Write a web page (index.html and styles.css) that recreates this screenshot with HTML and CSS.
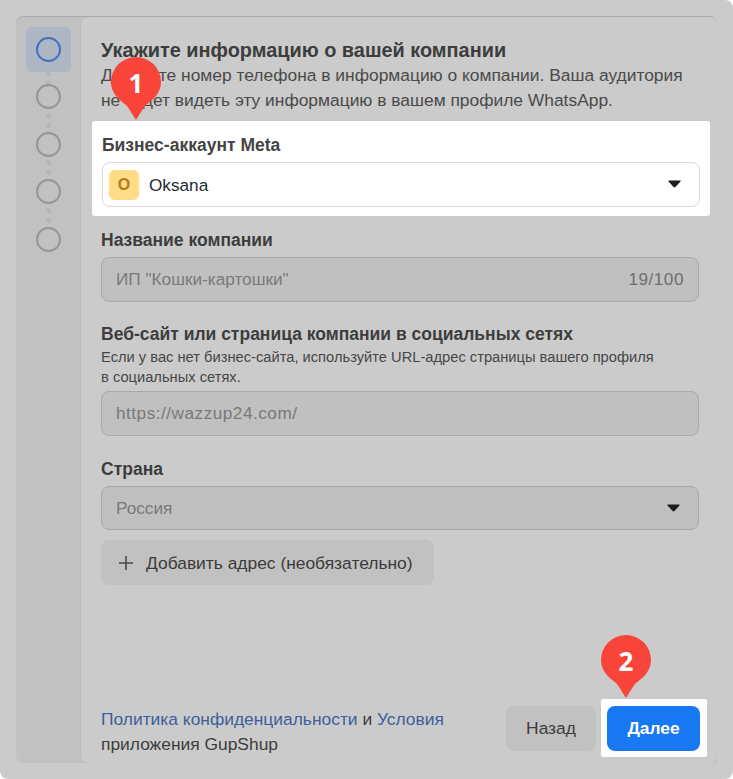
FILE: index.html
```html
<!DOCTYPE html>
<html lang="ru">
<head>
<meta charset="utf-8">
<title>WhatsApp</title>
<link rel="stylesheet" href="styles.css">
</head>
<body>
<div class="overlay">
  <div class="panel">
    <nav class="steps">
      <div class="step-active"><span class="ring ring-blue"></span></div>
      <span class="dots"><i></i><i></i></span>
      <span class="ring"></span>
      <span class="dots"><i></i><i></i></span>
      <span class="ring"></span>
      <span class="dots"><i></i><i></i></span>
      <span class="ring"></span>
      <span class="dots"><i></i><i></i></span>
      <span class="ring"></span>
    </nav>
    <main class="main">
      <h1 class="title">Укажите информацию о вашей компании</h1>
      <p class="lead">Добавьте номер телефона в информацию о компании. Ваша аудитория не будет видеть эту информацию в вашем профиле WhatsApp.</p>
      <section class="highlight">
        <div class="label label-hl">Бизнес-аккаунт Meta</div>
        <div class="account">
          <span class="avatar">O</span>
          <span class="account-name">Oksana</span>
          <svg class="caret caret-account" width="13" height="8" viewBox="0 0 13 8"><path d="M1 0.5h11c.6 0 .9.6.5 1L7.4 7c-.5.6-1.3.6-1.8 0L.5 1.5C.1 1.1.4.5 1 .5z"/></svg>
        </div>
      </section>
      <div class="label label-company">Название компании</div>
      <div class="input"><span class="ph">ИП "Кошки-картошки"</span><span class="count">19/100</span></div>
      <div class="label label-site">Веб-сайт или страница компании в социальных сетях</div>
      <p class="hint">Если у вас нет бизнес-сайта, используйте URL-адрес страницы вашего профиля<br>в социальных сетях.</p>
      <div class="input input-site"><span class="ph ph-url">https://wazzup24.com/</span></div>
      <div class="label label-country">Страна</div>
      <div class="input input-country"><span class="ph">Россия</span>
        <svg class="caret" width="13" height="8" viewBox="0 0 13 8"><path d="M1 0.5h11c.6 0 .9.6.5 1L7.4 7c-.5.6-1.3.6-1.8 0L.5 1.5C.1 1.1.4.5 1 .5z"/></svg>
      </div>
      <div class="add">
        <svg class="plus" width="14" height="14" viewBox="0 0 14 14"><path d="M7 0v14M0 7h14"/></svg>
        <span class="add-text">Добавить адрес (необязательно)</span>
      </div>
      <footer class="footer">
        <p class="legal"><a class="link">Политика конфиденциальности</a> и <a class="link">Условия</a><br>приложения GupShup</p>
        <div class="actions">
          <button class="btn btn-back">Назад</button>
          <div class="next-wrap"><button class="btn btn-next">Далее</button></div>
        </div>
      </footer>
    </main>
  </div>
</div>
<div class="pin pin-1">
  <svg width="50" height="64" viewBox="0 0 50 64"><path d="M25 0a25 25 0 0 1 25 25c0 11-8 18-15 23-3 3-6 9-10 15-4-6-7-12-10-15C8 43 0 36 0 25A25 25 0 0 1 25 0z"/></svg>
  <span class="pin-num">1</span>
</div>
<div class="pin pin-2">
  <svg width="50" height="64" viewBox="0 0 50 64"><path d="M25 0a25 25 0 0 1 25 25c0 11-8 18-15 23-3 3-6 9-10 15-4-6-7-12-10-15C8 43 0 36 0 25A25 25 0 0 1 25 0z"/></svg>
  <span class="pin-num">2</span>
</div>
</body>
</html>
```
FILE: styles.css
```css
* { box-sizing: border-box; }
html, body { margin: 0; height: 100%; background: #fff; }
body { position: relative; width: 733px; height: 779px; overflow: hidden; font-family: "Liberation Sans", Arial, sans-serif; color: #3b3b3b; }
.overlay { width: 733px; height: 779px; padding: 16px; background: #cbcbcb; border-radius: 0 8px 8px 8px; }
.panel { display: flex; height: 747px; background: #c1c1c1; border-top: 1px solid #a9a9ae; border-radius: 8px 8px 0 8px; }
.steps { width: 65px; flex: none; display: flex; flex-direction: column; align-items: center; padding: 10px 0 0 0; }
.step-active { width: 45px; height: 45px; display: flex; align-items: center; justify-content: center; background: #afb6c3; border-radius: 6px; margin-left: -1px; }
.ring { display: block; width: 25px; height: 25px; border: 2.5px solid #959595; border-radius: 50%; flex: none; margin-left: -1px; }
.ring-blue { border-color: #3f70c4; margin: 0; }
.dots { display: flex; flex-direction: column; gap: 5px; padding: 0; height: 22.5px; justify-content: center; margin-left: -1px; }
.steps > .step-active + .dots { height: 17px; margin-top: -5px; justify-content: flex-start; padding-top: 5px; }
.dots i { display: block; width: 5px; height: 5px; border-radius: 50%; background: #b4b4b4; }
.main { flex: 1; display: flex; flex-direction: column; min-width: 0; padding: 21px 18px 0 20px; background: #cbcbcb; border-radius: 8px; box-shadow: -1px 0 2px rgba(0,0,0,.04); }
.title { margin: 0; font-size: 19.9px; line-height: 24px; font-weight: 700; color: #3d3d3d; }
.lead { margin: 1px 0 0; font-size: 17.4px; line-height: 25px; color: #4a4a4a; width: 590px; }
.highlight { margin: 8px -11px 0 -9px; padding: 13px 10px 8px 10px; height: 95px; background: #fff; border-radius: 3px; }
.label { font-size: 17.5px; line-height: 22px; font-weight: 700; color: #3d3d3d; }
.label-hl { color: #444; }
.account { display: flex; align-items: center; height: 45px; margin-top: 6px; padding: 0 18px 0 6px; border: 1px solid #d9d9d9; border-radius: 8px; background: #fff; }
.avatar { width: 30px; height: 30px; display: flex; align-items: center; justify-content: center; background: #ffdc85; border-radius: 6px; color: #b57a1e; font-size: 16px; font-weight: 700; }
.account-name { margin-left: 10px; padding-top: 1px; font-size: 17.2px; color: #1c2b33; flex: 1; }
.caret { fill: #1c1c1c; flex: none; }
.caret-account { margin-top: -1px; }
.label-company { margin-top: 13px; }
.input { display: flex; align-items: center; justify-content: space-between; height: 45px; padding: 0 14px; margin-top: 6px; background: #c0c0c0; border: 1px solid #a9a9a9; border-radius: 8px; font-size: 17.2px; }
.ph { color: #797979; }
.ph-url { letter-spacing: .5px; }
.count { color: #6e6e6e; letter-spacing: .5px; }
.label-site { margin-top: 21px; }
.hint { margin: 2px 0 0; font-size: 14.7px; line-height: 20px; color: #474747; }
.input-site { margin-top: 4px; }
.label-country { margin-top: 22px; }
.input-country { margin-top: 6px; padding-right: 18px; height: 44px; }
.add { display: flex; align-items: center; width: 333px; height: 45px; margin-top: 10px; padding: 0 0 0 18px; background: #c1c1c1; border-radius: 8px; font-size: 17.4px; color: #3b3b3b; }
.add-text { padding-top: 1px; }
.plus { stroke: #4a4a4a; stroke-width: 1.6; fill: none; margin-right: 13px; }
.footer { display: flex; align-items: flex-start; justify-content: space-between; margin-top: auto; height: 58px; margin-bottom: 6px; }
.legal { margin: 0; padding-top: 8px; font-size: 17.4px; line-height: 25px; color: #3d3d3d; }
.link { color: #3d5f9e; }
.actions { display: flex; align-items: center; margin-right: -8px; gap: 5px; height: 58px; }
.btn { height: 45px; border: 0; border-radius: 8px; font-family: inherit; font-size: 17.4px; padding: 0; }
.btn-back { width: 90px; background: #c1c1c1; color: #3d3d3d; }
.next-wrap { display: flex; align-items: center; justify-content: flex-start; width: 106px; height: 58px; padding-left: 6px; background: #fff; border-radius: 2px; }
.btn-next { width: 93px; background: #1877f2; color: #fff; font-weight: 700; }
.pin { position: absolute; width: 50px; height: 64px; }
.pin svg { display: block; fill: #f9443a; }
.pin-1 { left: 111px; top: 57px; }
.pin-2 { left: 601px; top: 635px; }
.pin-num { position: absolute; left: 0; top: 0; width: 50px; height: 52px; display: flex; align-items: center; justify-content: center; color: #fff; font-family: "Open Sans", sans-serif; font-size: 26px; font-weight: 700; }
```
